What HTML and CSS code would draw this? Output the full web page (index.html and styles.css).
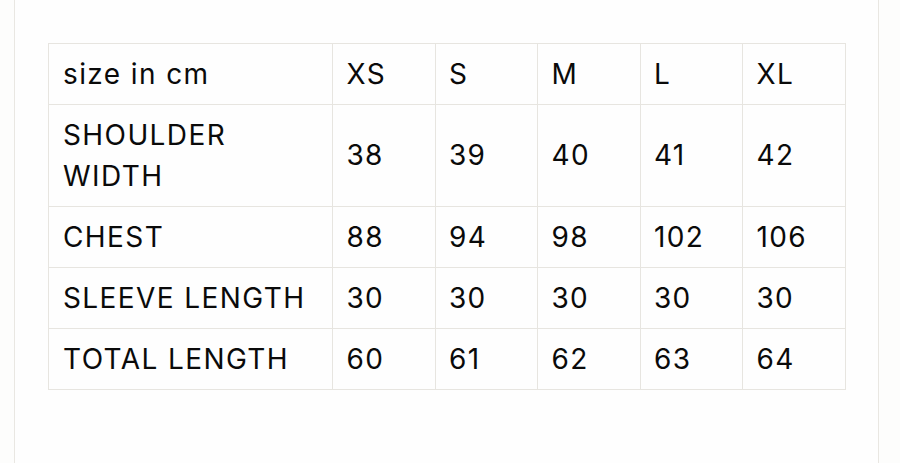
FILE: index.html
```html
<!DOCTYPE html>
<html lang="en">
<head>
<meta charset="utf-8">
<title>Size chart</title>
<link rel="stylesheet" href="styles.css">
</head>
<body>
<div class="page">
  <table class="size-table">
    <tr><td class="label">size in cm</td><td>XS</td><td>S</td><td>M</td><td>L</td><td>XL</td></tr>
    <tr class="tall"><td class="label">SHOULDER<br>WIDTH</td><td>38</td><td>39</td><td>40</td><td>41</td><td>42</td></tr>
    <tr><td class="label">CHEST</td><td>88</td><td>94</td><td>98</td><td>102</td><td>106</td></tr>
    <tr><td class="label">SLEEVE LENGTH</td><td>30</td><td>30</td><td>30</td><td>30</td><td>30</td></tr>
    <tr><td class="label">TOTAL LENGTH</td><td>60</td><td>61</td><td>62</td><td>63</td><td>64</td></tr>
  </table>
</div>
</body>
</html>
```
FILE: styles.css
```css
html, body {
  margin: 0;
  padding: 0;
  background: #fdfdfc;
  height: 100%;
}
.page {
  margin: 0 21px 0 14px;
  border-left: 1px solid #e9e7e2;
  border-right: 1px solid #e9e7e2;
  background: #fefefe;
  min-height: 100%;
  box-sizing: border-box;
  padding: 43px 33px 0 33px;
}
.size-table {
  border-collapse: collapse;
  width: 798px;
  font-family: Inter, "Liberation Sans", sans-serif;
  font-size: 28px;
  letter-spacing: 1.4px;
  color: #0a0a0a;
  table-layout: fixed;
}
.size-table td {
  border: 1px solid #e7e5e0;
  padding: 0 13px;
  height: 61px;
  line-height: 41px;
  vertical-align: middle;
  text-align: left;
  width: 102px;
  box-sizing: border-box;
}
.size-table td.label {
  width: 283px;
  padding-left: 14px;
}
.size-table tr.tall td {
  height: 102px;
}
```
